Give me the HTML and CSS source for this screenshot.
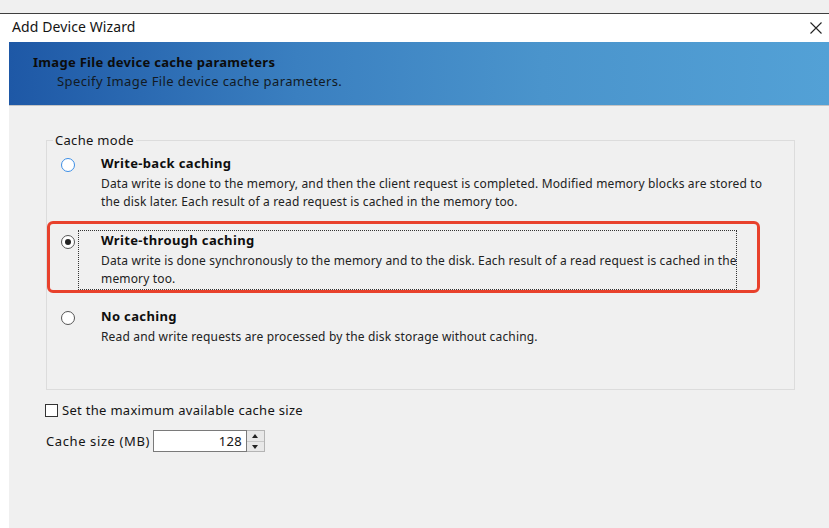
FILE: index.html
```html
<!DOCTYPE html>
<html>
    <head>
        <title>Add Device Wizard</title>
        <link rel="stylesheet" href="styles.css">
    </head>
    <body>
        <div class="topstrip"></div>
        <div class="titlebar">
            <span class="title">Add Device Wizard</span>
            <svg class="close" width="12" height="12" viewBox="0 0 12 12">
                <path d="M0.5 0.5 L11.5 11.5 M11.5 0.5 L0.5 11.5" stroke="#222" stroke-width="1.1" fill="none"/>
            </svg>
        </div>
        <div class="wizard">
            <div class="banner">
                <div class="banner-title">Image File device cache parameters</div>
                <div class="banner-sub">Specify Image File device cache parameters.</div>
            </div>
            <div class="page">
                <fieldset class="group">
                    <legend>Cache mode</legend>
                    <div class="options">
                        <div class="option">
                            <span class="radio hot"></span>
                            <div class="option-text">
                                <div class="option-title">Write-back caching</div>
                                <div class="option-desc">Data write is done to the memory, and then the client request is completed. Modified memory blocks are stored to<br>the disk later. Each result of a read request is cached in the memory too.</div>
                            </div>
                        </div>
                        <div class="option selected">
                            <span class="radio checked"></span>
                            <div class="option-text focused">
                                <div class="option-title">Write-through caching</div>
                                <div class="option-desc">Data write is done synchronously to the memory and to the disk. Each result of a read request is cached in the<br>memory too.</div>
                            </div>
                        </div>
                        <div class="option">
                            <span class="radio"></span>
                            <div class="option-text">
                                <div class="option-title">No caching</div>
                                <div class="option-desc">Read and write requests are processed by the disk storage without caching.</div>
                            </div>
                        </div>
                    </div>
                </fieldset>
                <div class="check-row">
                    <span class="checkbox"></span>
                    <span>Set the maximum available cache size</span>
                </div>
                <div class="size-row">
                    <span class="size-label">Cache size (MB)</span>
                    <span class="spin-value">128</span>
                    <span class="spin-buttons">
                        <span class="spin-up"></span>
                        <span class="spin-down"></span>
                    </span>
                </div>
            </div>
        </div>
    </body>
</html>
```

FILE: styles.css
```css
html, body {
    margin: 0;
    padding: 0;
}
body {
    width: 829px;
    height: 528px;
    overflow: hidden;
    background: #fff;
    font-family: "Noto Sans", "Open Sans", sans-serif;
    color: #141414;
    display: flex;
    flex-direction: column;
}
.topstrip {
    height: 13px;
    background: #f0f0f0;
    border-bottom: 1px solid #3f3f3f;
    flex: none;
}
.titlebar {
    height: 28px;
    flex: none;
    display: flex;
    align-items: center;
    justify-content: space-between;
    padding: 0 7px 3px 12px;
    box-sizing: border-box;
    font-size: 14px;
    letter-spacing: 0.1px;
}
.close {
    margin-top: 3px;
}
.wizard {
    flex: 1;
    margin-left: 9px;
    display: flex;
    flex-direction: column;
    background: #f0f0f0;
}
.banner {
    height: 64px;
    flex: none;
    padding: 11px 0 0 24px;
    box-sizing: border-box;
    border-bottom: 1px solid #c4c4c4;
    background: linear-gradient(to right, #1e58a6 0%, #3a7fc0 35%, #4a94cc 65%, #53a1d6 100%);
    color: #0c0c0c;
}
.banner-title {
    font-size: 13px;
    font-weight: bold;
    line-height: 19px;
    letter-spacing: 0.3px;
}
.banner-sub {
    font-size: 13px;
    line-height: 18px;
    padding-left: 24px;
    letter-spacing: 0.4px;
    color: #121a24;
}
.page {
    flex: 1;
    font-size: 13px;
    letter-spacing: 0.3px;
}
.group {
    margin: 25px 0 0 37px;
    width: 749px;
    box-sizing: border-box;
    padding: 0;
    border: 1px solid #dcdcdc;
    min-width: 0;
}
.group legend {
    margin-left: 6px;
    padding: 0 2px;
    line-height: 18px;
}
.options {
    padding: 4px 0 41px 14px;
}
.option {
    display: flex;
    align-items: flex-start;
    position: relative;
}
.option + .option {
    margin-top: 17px;
}
.option.selected + .option {
    margin-top: 16px;
}
.radio {
    width: 14px;
    height: 14px;
    box-sizing: border-box;
    margin-top: 5px;
    border: 1px solid #555;
    border-radius: 50%;
    background: #fff;
    flex: none;
    position: relative;
}
.radio.hot {
    border-color: #3c8ee6;
}
.radio.checked::after {
    content: "";
    position: absolute;
    left: 3px;
    top: 3px;
    width: 6px;
    height: 6px;
    border-radius: 50%;
    background: #222;
}
.option-text {
    margin-left: 3px;
    padding: 0 0 2px 23px;
    white-space: nowrap;
}
.option-text.focused {
    width: 659px;
    box-sizing: border-box;
    outline: 1px dotted #333;
    outline-offset: -1px;
}
.option.selected::after {
    content: "";
    position: absolute;
    top: -9px;
    left: -14px;
    width: 713px;
    height: 72px;
    box-sizing: border-box;
    border: 3px solid #e8412c;
    border-radius: 6px;
    pointer-events: none;
}
.option-title {
    font-weight: bold;
    line-height: 20px;
    letter-spacing: 0.35px;
    color: #0e0e0e;
}
.option-desc {
    margin-top: 2px;
    font-size: 12px;
    line-height: 18px;
    letter-spacing: 0.16px;
    color: #222;
}
.check-row {
    margin: 11px 0 0 36px;
    display: flex;
    align-items: center;
    line-height: 18px;
}
.checkbox {
    width: 13px;
    height: 13px;
    box-sizing: border-box;
    border: 1px solid #333;
    background: #fff;
    margin-right: 4px;
}
.size-row {
    margin: 11px 0 0 37px;
    display: flex;
    align-items: center;
    height: 22px;
}
.size-label {
    width: 107px;
    letter-spacing: 0.6px;
}
.spin-value {
    width: 94px;
    height: 22px;
    box-sizing: border-box;
    border: 1px solid #7a7a7a;
    background: #fff;
    text-align: right;
    padding-right: 4px;
    line-height: 20px;
}
.spin-buttons {
    width: 18px;
    height: 22px;
    box-sizing: border-box;
    border: 1px solid #b4b4b4;
    border-left: none;
    display: flex;
    flex-direction: column;
    background: #e8e8e8;
}
.spin-up, .spin-down {
    flex: 1;
    position: relative;
}
.spin-up {
    border-bottom: 1px solid #c8c8c8;
}
.spin-up::after, .spin-down::after {
    content: "";
    position: absolute;
    left: 5px;
    border-left: 3px solid transparent;
    border-right: 3px solid transparent;
}
.spin-up::after {
    top: 3px;
    border-bottom: 4px solid #222;
}
.spin-down::after {
    top: 3px;
    border-top: 4px solid #222;
}
```
